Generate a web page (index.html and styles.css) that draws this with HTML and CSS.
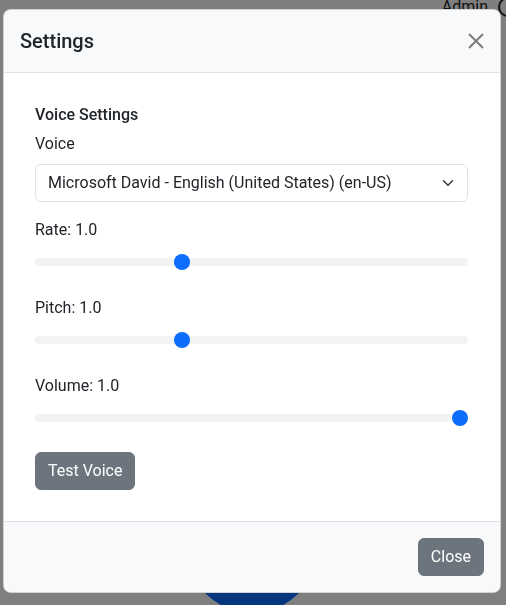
FILE: index.html
```html
<!DOCTYPE html>
<html lang="en">
<head>
<meta charset="utf-8">
<title>Settings</title>
<link rel="stylesheet" href="styles.css">
</head>
<body>
<div class="page">
  <header class="topbar">
    <span class="user">Admin</span>
    <span class="user-badge"></span>
  </header>
  <main class="stage">
    <div class="mic-button"></div>
  </main>
</div>
<div class="backdrop"></div>
<div class="modal" role="dialog" aria-labelledby="settingsTitle">
  <div class="modal-header">
    <h5 class="modal-title" id="settingsTitle">Settings</h5>
    <button class="btn-close" type="button" aria-label="Close">
      <svg viewBox="0 0 16 16" width="16" height="16" aria-hidden="true">
        <path d="M1 1 15 15M15 1 1 15" stroke="currentColor" stroke-width="2" fill="none"/>
      </svg>
    </button>
  </div>
  <div class="modal-body">
    <h6 class="section-title">Voice Settings</h6>
    <div class="field field-select">
      <label class="form-label" for="voice">Voice</label>
      <div class="select-wrap">
        <select id="voice" class="form-select">
          <option>Microsoft David - English (United States) (en-US)</option>
        </select>
        <svg class="chevron" viewBox="0 0 16 16" width="16" height="12" aria-hidden="true">
          <path d="m2 5 6 6 6-6" stroke="#343a40" stroke-width="2" stroke-linecap="round" stroke-linejoin="round" fill="none"/>
        </svg>
      </div>
    </div>
    <div class="field">
      <label class="form-label" for="rate">Rate: 1.0</label>
      <input id="rate" class="form-range" type="range" min="0.5" max="2" step="0.1" value="1">
    </div>
    <div class="field">
      <label class="form-label" for="pitch">Pitch: 1.0</label>
      <input id="pitch" class="form-range" type="range" min="0.5" max="2" step="0.1" value="1">
    </div>
    <div class="field">
      <label class="form-label" for="volume">Volume: 1.0</label>
      <input id="volume" class="form-range" type="range" min="0" max="1" step="0.1" value="1">
    </div>
    <button class="btn btn-secondary" type="button">Test Voice</button>
  </div>
  <div class="modal-footer">
    <button class="btn btn-secondary" type="button">Close</button>
  </div>
</div>
</body>
</html>
```

FILE: styles.css
```css
* { box-sizing: border-box; }

html, body {
  margin: 0;
  height: 100%;
}

body {
  font-family: Roboto, "Noto Sans", sans-serif;
  font-size: 16px;
  line-height: 1.5;
  color: #212529;
  background: #ffffff;
  overflow: hidden;
}

.page {
  height: 100%;
  display: flex;
  flex-direction: column;
}

.topbar {
  display: flex;
  justify-content: flex-end;
  align-items: flex-start;
  gap: 10px;
  margin-top: -5px;
  height: 20px;
  margin-right: -12px;
}

.user {
  font-size: 16px;
  color: #212529;
}

.user-badge {
  width: 20px;
  height: 20px;
  border: 2px solid #212529;
  border-radius: 50%;
  margin-top: 2px;
}

.stage {
  flex: 1;
  display: flex;
  justify-content: center;
  align-items: flex-end;
}

.mic-button {
  width: 130px;
  height: 130px;
  border-radius: 50%;
  background: #0d6efd;
  margin-bottom: -8px;
  margin-left: -2px;
}

.backdrop {
  position: fixed;
  inset: 0;
  background: rgba(0, 0, 0, 0.5);
}

.modal {
  position: absolute;
  top: 9px;
  left: 3px;
  width: 498px;
  background: #ffffff;
  border: 1px solid rgba(0, 0, 0, 0.175);
  border-radius: 8px;
  overflow: hidden;
  display: flex;
  flex-direction: column;
}

.modal-header {
  display: flex;
  align-items: center;
  justify-content: space-between;
  padding: 16px;
  background: #f8f9fa;
  border-bottom: 1px solid #dee2e6;
}

.modal-title {
  margin: 0;
  font-size: 20px;
  font-weight: 500;
  line-height: 30px;
}

.btn-close {
  width: 32px;
  height: 32px;
  padding: 8px;
  margin: -8px -8px -8px 0;
  border: 0;
  background: transparent;
  color: #000;
  opacity: 0.5;
  display: flex;
  align-items: center;
  justify-content: center;
}

.modal-body {
  padding: 32px 32px 31px 31px;
  display: flex;
  flex-direction: column;
  align-items: flex-start;
}

.section-title {
  margin: 0 0 8px;
  font-size: 16px;
  font-weight: 500;
  line-height: 19px;
}

.field {
  width: 100%;
  display: flex;
  flex-direction: column;
  margin-bottom: 22px;
}

.field-select {
  margin-bottom: 16px;
}

.form-label {
  line-height: 24px;
  margin-bottom: 8px;
}

.select-wrap {
  position: relative;
}

.form-select {
  width: 100%;
  height: 38px;
  appearance: none;
  -webkit-appearance: none;
  font: inherit;
  color: #212529;
  background: #ffffff;
  border: 1px solid #dee2e6;
  border-radius: 6px;
  padding: 6px 36px 6px 12px;
}

.chevron {
  position: absolute;
  right: 12px;
  top: 13px;
  pointer-events: none;
}

.form-range {
  width: 100%;
  height: 24px;
  margin: 0;
  padding: 0;
  background: transparent;
  appearance: none;
  -webkit-appearance: none;
}

.form-range::-webkit-slider-runnable-track {
  height: 8px;
  background: #f1f3f5;
  border-radius: 16px;
  border: 0;
}

.form-range::-webkit-slider-thumb {
  -webkit-appearance: none;
  appearance: none;
  width: 16px;
  height: 16px;
  margin-top: -4px;
  border-radius: 50%;
  border: 0;
  background: #0d6efd;
}

.btn {
  font: inherit;
  line-height: 24px;
  padding: 6px 12px;
  border-radius: 6px;
  border: 1px solid transparent;
}

.btn-secondary {
  color: #ffffff;
  background: #6c757d;
  border-color: #6c757d;
}

.modal-footer {
  display: flex;
  justify-content: flex-end;
  padding: 12px;
  background: #f8f9fa;
  border-top: 1px solid #dee2e6;
}

.modal-footer .btn {
  margin: 4px;
}
```
